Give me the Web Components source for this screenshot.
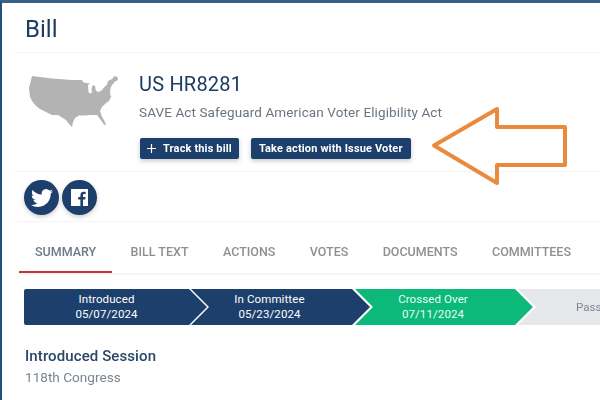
<!DOCTYPE html>
<html lang="en">
<head>
<meta charset="utf-8">
<title>Bill</title>
<style>
    html, body { margin: 0; padding: 0; background: #ffffff; overflow: hidden; }
    body { width: 600px; height: 400px; font-family: 'Roboto', 'Liberation Sans', sans-serif; }
</style>
</head>
<body>
<bill-page>
    <bill-header>Bill</bill-header>
    <bill-summary code="US HR8281" name="SAVE Act Safeguard American Voter Eligibility Act"></bill-summary>
    <share-row></share-row>
    <bill-tabs></bill-tabs>
    <bill-stepper>
        <bill-step style="--w: 183px" kind="first" label="Introduced" date="05/07/2024"></bill-step>
        <bill-step style="--w: 179px; --o: -16px" label="In Committee" date="05/23/2024"></bill-step>
        <bill-step style="--w: 178px; --o: -15px" kind="green" label="Crossed Over" date="07/11/2024"></bill-step>
        <bill-step style="--w: 82px; --o: -15px" kind="todo" label="Pass"></bill-step>
    </bill-stepper>
    <session-info></session-info>
    <callout-arrow></callout-arrow>
</bill-page>

<script>
// Page frame: blue bar on top and left edge
class BillPage extends HTMLElement {
    constructor() {
        super();
        this.attachShadow({ mode: 'open' });
        this.shadowRoot.innerHTML = `
            <style>
                :host {
                    display: block;
                    position: relative;
                    box-sizing: border-box;
                    width: 600px;
                    height: 400px;
                    overflow: hidden;
                    border-top: 3px solid #3b6088;
                    border-left: 2px solid #24507e;
                    color: #1c3c63;
                    filter: blur(0.35px);
                }
            </style>
            <slot></slot>
        `;
    }
}

class BillHeader extends HTMLElement {
    constructor() {
        super();
        this.attachShadow({ mode: 'open' });
        this.shadowRoot.innerHTML = `
            <style>
                :host {
                    display: block;
                    box-sizing: border-box;
                    height: 50px;
                    margin-left: 13px;
                    padding: 10px 0 0 10px;
                    border-bottom: 1px solid #f4f4f4;
                    font-size: 24px;
                    line-height: 32px;
                    color: #1c3c63;
                }
            </style>
            <slot></slot>
        `;
    }
}

class BillSummary extends HTMLElement {
    constructor() {
        super();
        this.attachShadow({ mode: 'open' });
        this.shadowRoot.innerHTML = `
            <style>
                :host {
                    display: flex;
                    box-sizing: border-box;
                    height: 119px;
                    margin-left: 13px;
                    padding: 18px 0 0 13px;
                    border-bottom: 1px solid #f4f4f4;
                }
                svg.map { display: block; width: 96px; height: 60px; margin: 3px 0 0 0; flex: none; }
                .info { margin-left: 15px; }
                h1 { margin: 0; font-size: 20px; line-height: 26px; font-weight: 400; color: #1c3c63; letter-spacing: 0.2px; }
                p { margin: 5px 0 0; font-size: 13.500px; line-height: 20px; color: #6a7582; letter-spacing: 0.11px; white-space: nowrap; }
                .actions { display: flex; gap: 12px; margin: 16px 0 0 1px; }
                button {
                    display: flex;
                    align-items: center;
                    height: 21px;
                    padding: 0 8px;
                    border: 0;
                    border-radius: 2px;
                    background: #1c3f6b;
                    color: #ffffff;
                    font: 700 11px 'Roboto', sans-serif;
                    letter-spacing: 0.15px;
                    box-shadow: 0 2px 5px rgba(0, 0, 0, 0.22);
                    white-space: nowrap;
                }
                button.track { padding: 0 7px; }
                button svg { display: block; width: 9px; height: 9px; margin: 0 7px 0 0; }
            </style>
            <svg class="map" viewBox="28 74 96 60" aria-hidden="true">
                <path fill="#b3b3b3" d="M32 76 L52 78.500 L72 80 L82 80 L83.500 82.500 L90 83.500 L88 85 L88.500 92 L90 93.500 L92 92.500 L91.500 88 L93 85 L95 86 L96 91 L99 92 L102 90 L103.500 88 L107 84.500 L108 81 L112 79 L114.500 76 L117.500 77 L118 80 L115 81.500 L112 85 L110.500 88 L110 93 L111 97 L109 101 L106 103 L102 107 L100 111 L102 117 L105 122 L106 125.500 L104 124.500 L100 119 L97 115 L90 115 L85 115.500 L79 115.500 L75 118 L73 122 L72 127 L69 124 L66 120 L62 117.500 L58 115 L52 115 L47 112.500 L40 109 L36 106 L32 101 L30 97 L29 88 Z"/>
            </svg>
            <div class="info">
                <h1></h1>
                <p></p>
                <div class="actions">
                    <button class="track">
                        <svg viewBox="0 0 9 9" aria-hidden="true"><path d="M4.500 0 V9 M0 4.500 H9" stroke="#ffffff" stroke-width="1.200" fill="none"/></svg>
                        Track this bill
                    </button>
                    <button>Take action with Issue Voter</button>
                </div>
            </div>
        `;
    }

    connectedCallback() {
        this.shadowRoot.querySelector('h1').textContent = this.getAttribute('code');
        this.shadowRoot.querySelector('p').textContent = this.getAttribute('name');
    }
}

class ShareRow extends HTMLElement {
    constructor() {
        super();
        this.attachShadow({ mode: 'open' });
        this.shadowRoot.innerHTML = `
            <style>
                :host {
                    display: flex;
                    box-sizing: border-box;
                    height: 50px;
                    gap: 3px;
                    margin-left: 13px;
                    padding: 8px 0 0 9px;
                    border-bottom: 1px solid #f4f4f4;
                }
                .circle {
                    display: flex;
                    align-items: center;
                    justify-content: center;
                    width: 35px;
                    height: 35px;
                    border-radius: 50%;
                    background: #1c3f6b;
                    box-shadow: 0 2px 4px rgba(0, 0, 0, 0.2);
                }
            </style>
            <div class="circle">
                <svg width="22" height="22" viewBox="0 0 24 24" aria-hidden="true">
                    <path fill="#ffffff" d="M23.953 4.570a10 10 0 01-2.825.775 4.958 4.958 0 002.163-2.723c-.951.555-2.005.959-3.127 1.184a4.920 4.920 0 00-8.384 4.482C7.690 8.095 4.067 6.130 1.640 3.162a4.822 4.822 0 00-.666 2.475c0 1.710.870 3.213 2.188 4.096a4.904 4.904 0 01-2.228-.616v.060a4.923 4.923 0 003.946 4.827 4.996 4.996 0 01-2.212.085 4.936 4.936 0 004.604 3.417 9.867 9.867 0 01-6.102 2.105c-.390 0-.779-.023-1.170-.067a13.995 13.995 0 007.557 2.209c9.053 0 13.998-7.496 13.998-13.985 0-.210 0-.420-.015-.630A9.935 9.935 0 0024 4.590z"/>
                </svg>
            </div>
            <div class="circle">
                <svg width="17" height="17" viewBox="0 0 17 17" aria-hidden="true">
                    <path fill="#ffffff" d="M0 0 H17 V17 H12 V10.500 H14.200 L14.500 8 H12 V6.400 C12 5.600 12.300 5.100 13.300 5.100 H14.600 V2.900 C14.300 2.900 13.600 2.800 12.700 2.800 C10.800 2.800 9.400 4 9.400 6.100 V8 H7.200 V10.500 H9.400 V17 H0 Z"/>
                </svg>
            </div>
        `;
    }
}

class BillTabs extends HTMLElement {
    constructor() {
        super();
        this.attachShadow({ mode: 'open' });
        const tabs = ['SUMMARY', 'BILL TEXT', 'ACTIONS', 'VOTES', 'DOCUMENTS', 'COMMITTEES'];
        this.shadowRoot.innerHTML = `
            <style>
                :host {
                    display: flex;
                    gap: 2.400px;
                    box-sizing: border-box;
                    height: 53px;
                    margin-left: 17px;
                    border-bottom: 2px solid #f5f5f5;
                    white-space: nowrap;
                }
                .tab {
                    box-sizing: border-box;
                    height: 51px;
                    padding: 20px 16px 0;
                    font-size: 12.500px;
                    line-height: 20px;
                    font-weight: 500;
                    color: #8f8f8f;
                }
                .tab.active { color: #6c7a8a; border-bottom: 2px solid #c9303e; }
            </style>
            ${tabs.map((t, i) => `<div class="tab${i === 0 ? ' active' : ''}">${t}</div>`).join('')}
        `;
    }
}

class BillStepper extends HTMLElement {
    constructor() {
        super();
        this.attachShadow({ mode: 'open' });
        this.shadowRoot.innerHTML = `
            <style>
                :host {
                    display: flex;
                    margin: 14px 0 0 22px;
                }
            </style>
            <slot></slot>
        `;
    }
}

// One chevron of the progress bar
class BillStep extends HTMLElement {
    constructor() {
        super();
        this.attachShadow({ mode: 'open' });
    }

    connectedCallback() {
        const kind = this.getAttribute('kind') || '';
        const date = this.getAttribute('date');
        this.shadowRoot.innerHTML = `
            <style>
                :host {
                    display: block;
                    flex: none;
                    width: var(--w, 184px);
                    height: 36px;
                    margin-left: var(--o, 0);
                }
                .shape {
                    box-sizing: border-box;
                    height: 36px;
                    padding: 3px 22px 0 0;
                    background: #1c3f6b;
                    color: #ffffff;
                    font-size: 11.500px;
                    line-height: 15px;
                    letter-spacing: 0.1px;
                    text-align: center;
                    clip-path: polygon(0 0, calc(100% - 18px) 0, 100% 50%, calc(100% - 18px) 100%, 0 100%, 18px 50%);
                }
                .first { padding-right: 18px; border-radius: 2px 0 0 2px; clip-path: polygon(0 0, calc(100% - 18px) 0, 100% 50%, calc(100% - 18px) 100%, 0 100%); }
                .green { background: #0cb97a; color: #e9fff5; }
                .todo { background: #e6e7ea; color: #7d8794; padding: 0 0 0 58px; line-height: 36px; letter-spacing: 0; text-align: left; clip-path: polygon(0 0, 100% 0, 100% 100%, 0 100%, 18px 50%); }
            </style>
            <div class="shape ${kind}">${this.getAttribute('label')}${date ? `<br>${date}` : ''}</div>
        `;
    }
}

class SessionInfo extends HTMLElement {
    constructor() {
        super();
        this.attachShadow({ mode: 'open' });
        this.shadowRoot.innerHTML = `
            <style>
                :host { display: block; margin: 21px 0 0 23px; }
                h2 { margin: 0; font-size: 15px; line-height: 20px; font-weight: 500; letter-spacing: 0.1px; color: #2a4668; }
                p { margin: 1px 0 0; font-size: 13.600px; line-height: 20px; color: #7b8591; }
            </style>
            <h2>Introduced Session</h2>
            <p>118th Congress</p>
        `;
    }
}

// Orange arrow drawn over the screenshot, pointing at the button
class CalloutArrow extends HTMLElement {
    constructor() {
        super();
        this.attachShadow({ mode: 'open' });
        this.shadowRoot.innerHTML = `
            <style>
                :host { display: block; position: absolute; left: -2px; top: -3px; width: 600px; height: 400px; pointer-events: none; }
                svg { display: block; }
            </style>
            <svg width="600" height="400" viewBox="0 0 600 400" aria-hidden="true">
                <path d="M434 145.500 L497 109 V127 H565 V165 H497 V183 Z" fill="none" stroke="#e98a3d" stroke-width="4" stroke-linejoin="round"/>
            </svg>
        `;
    }
}

customElements.define('bill-page', BillPage);
customElements.define('bill-header', BillHeader);
customElements.define('bill-summary', BillSummary);
customElements.define('share-row', ShareRow);
customElements.define('bill-tabs', BillTabs);
customElements.define('bill-stepper', BillStepper);
customElements.define('bill-step', BillStep);
customElements.define('session-info', SessionInfo);
customElements.define('callout-arrow', CalloutArrow);
</script>
</body>
</html>
